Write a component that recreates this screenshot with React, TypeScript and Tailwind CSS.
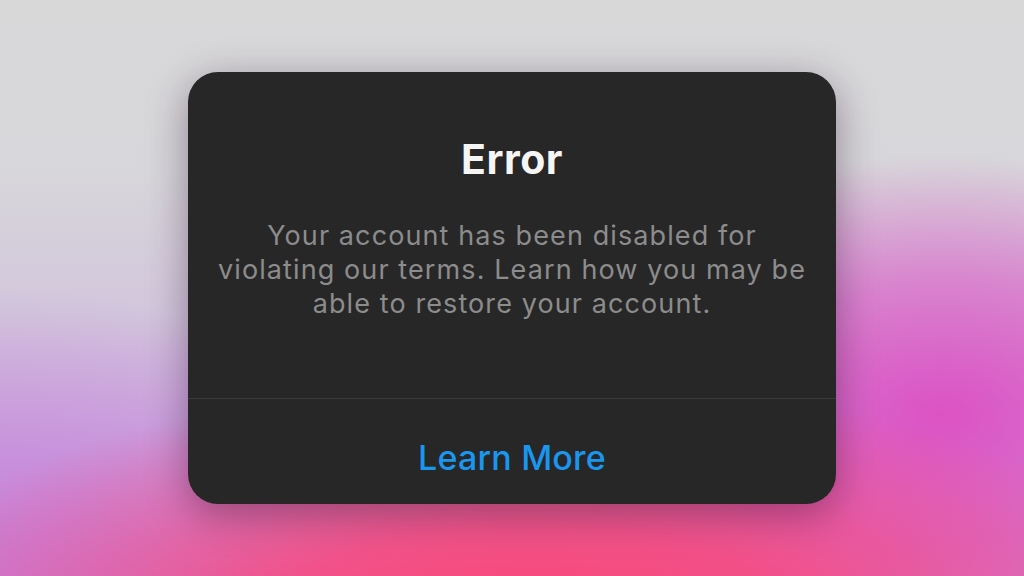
import React from 'react';

const bodyText =
  'Your account has been disabled for violating our terms. Learn how you may be able to restore your account.';

export default function App() {
  return (
    <div
      className="relative flex h-[576px] w-[1024px] items-center justify-center overflow-hidden bg-[radial-gradient(ellipse_65%_42%_at_52%_108%,#fb4476_0%,rgba(251,68,118,0.8)_40%,rgba(251,68,118,0)_100%),radial-gradient(ellipse_40%_45%_at_92%_72%,#dc52c4_0%,rgba(220,82,196,0.6)_50%,rgba(220,82,196,0)_100%),radial-gradient(ellipse_45%_55%_at_0%_105%,#c57edc_0%,rgba(197,126,220,0)_100%),linear-gradient(180deg,#d8d8d9_0%,#d7d6da_30%,#d2c6dc_55%,#cba6dc_80%,#c98ed8_100%)]"
      style={{ fontFamily: 'Inter, "Open Sans", "Liberation Sans", sans-serif' }}
    >
      {/* alert card */}
      <div className="flex w-[648px] flex-col overflow-hidden rounded-[30px] bg-[#272727] shadow-[0_10px_40px_rgba(40,10,40,0.4)]">
        <div className="flex flex-col items-center px-[24px] pb-[77px] pt-[63px] text-center">
          <h1 className="text-[41px] font-bold leading-[48px] tracking-[0.5px] text-[#f5f5f5]">Error</h1>
          <p className="mt-[36px] text-[27px] leading-[34px] tracking-[1.1px] text-[#8c8c8c]">{bodyText}</p>
        </div>
        <div className="h-px bg-[#393939]" />
        <button className="flex h-[105px] items-center justify-center pt-[12px] text-[34px] font-medium tracking-[0.2px] text-[#1a96ee]">
          Learn More
        </button>
      </div>
    </div>
  );
}
